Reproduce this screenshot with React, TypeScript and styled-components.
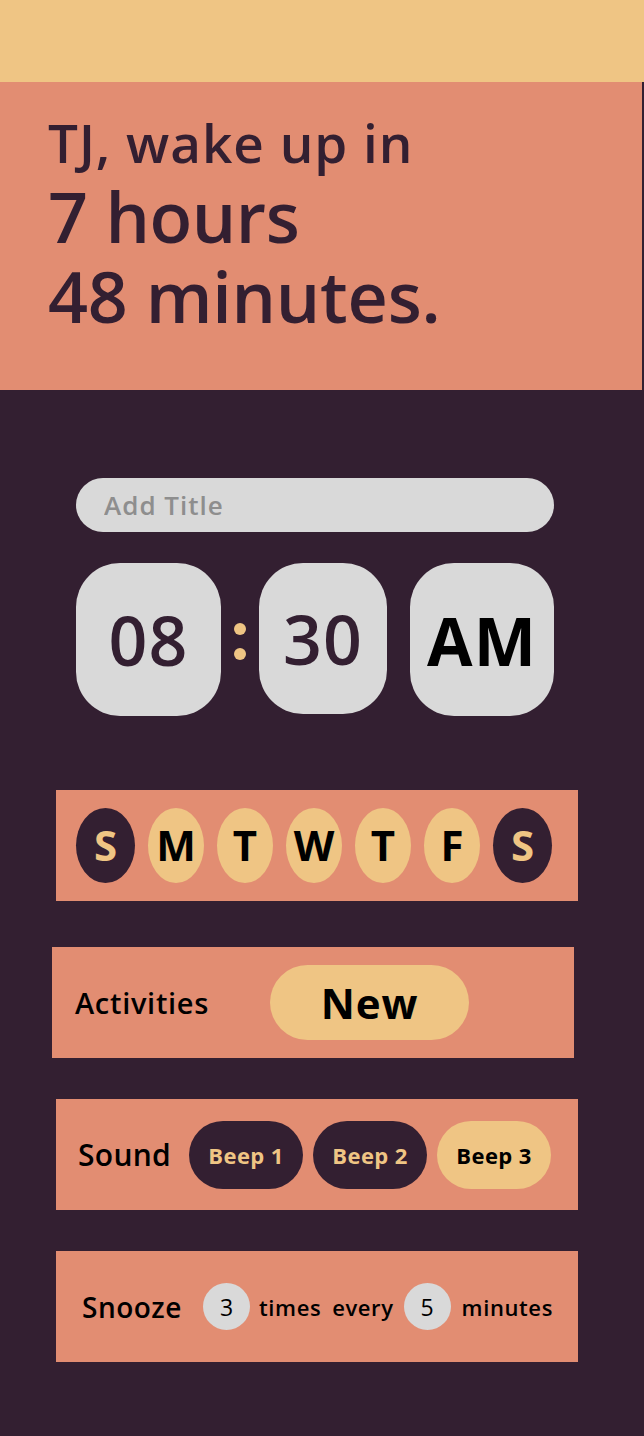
import React from 'react'
import styled, { createGlobalStyle } from 'styled-components'

const c = {
  sand: '#efc584',
  salmon: '#e28d72',
  plum: '#331f31',
  grey: '#d9d9d9',
  ink: '#000000',
}

const GlobalStyle = createGlobalStyle`
  html, body {
    margin: 0;
    padding: 0;
    background: ${c.plum};
  }
  body {
    font-family: 'Open Sans', 'Noto Sans', sans-serif;
  }
`

const Page = styled.div`
  width: 644px;
  min-height: 1436px;
  background: ${c.plum};
  display: flex;
  flex-direction: column;
`

const TopBar = styled.div`
  height: 82px;
  background: ${c.sand};
`

const Header = styled.header`
  height: 308px;
  width: 642px;
  background: ${c.salmon};
  box-sizing: border-box;
  padding: 27px 0 0 48px;
  color: ${c.plum};
`

const HeadLine = styled.div<{ $size: number; $lh: number; $ls: number }>`
  font-size: ${p => p.$size}px;
  font-weight: 600;
  line-height: ${p => p.$lh}px;
  letter-spacing: ${p => p.$ls}px;
  white-space: nowrap;
`

const Main = styled.main`
  display: flex;
  flex-direction: column;
  align-items: flex-start;
  padding: 88px 0 72px;
`

const TitleInput = styled.input`
  margin-left: 76px;
  width: 478px;
  height: 54px;
  box-sizing: border-box;
  border: none;
  outline: none;
  border-radius: 27px;
  background: ${c.grey};
  padding: 0 0 0 28px;
  font-family: inherit;
  font-size: 26px;
  font-weight: 600;
  letter-spacing: 1px;
  color: ${c.plum};
  &::placeholder {
    color: #8e8e8e;
  }
`

const TimeRow = styled.div`
  margin: 31px 0 0 76px;
  display: flex;
  align-items: flex-start;
`

const TimeBox = styled.div<{ $w: number; $h: number; $dark?: boolean }>`
  width: ${p => p.$w}px;
  height: ${p => p.$h}px;
  border-radius: 44px;
  background: ${c.grey};
  display: flex;
  align-items: center;
  justify-content: center;
  font-size: ${p => (p.$dark ? 68 : 66)}px;
  font-weight: ${p => (p.$dark ? 600 : 700)};
  color: ${p => (p.$dark ? c.plum : c.ink)};
  letter-spacing: 1px;
`

const Colon = styled.div`
  width: 38px;
  height: 153px;
  display: flex;
  flex-direction: column;
  align-items: center;
  justify-content: center;
  gap: 13px;
  padding-top: 4px;
  box-sizing: border-box;
  &::before,
  &::after {
    content: '';
    width: 12px;
    height: 12px;
    border-radius: 50%;
    background: ${c.sand};
  }
`

const Panel = styled.section<{ $left: number; $top: number; $pad: number }>`
  margin: ${p => p.$top}px 0 0 ${p => p.$left}px;
  width: 522px;
  height: 111px;
  box-sizing: border-box;
  background: ${c.salmon};
  display: flex;
  align-items: center;
  padding-left: ${p => p.$pad}px;
`

const DayList = styled.div`
  display: flex;
  gap: 13px;
`

const Day = styled.div<{ $off?: boolean }>`
  width: ${p => (p.$off ? 59 : 56)}px;
  height: 75px;
  border-radius: 50%;
  background: ${p => (p.$off ? c.plum : c.sand)};
  color: ${p => (p.$off ? c.sand : c.ink)};
  display: flex;
  align-items: center;
  justify-content: center;
  font-size: 42px;
  font-weight: 700;
  padding-bottom: 2px;
  box-sizing: border-box;
`

const Label = styled.span<{ $size: number; $w?: number; $ls?: number }>`
  font-size: ${p => p.$size}px;
  font-weight: 600;
  color: ${c.ink};
  width: ${p => (p.$w ? `${p.$w}px` : 'auto')};
  flex-shrink: 0;
  white-space: nowrap;
  letter-spacing: ${p => p.$ls ?? 0}px;
`

const NewButton = styled.button`
  width: 199px;
  height: 75px;
  border: none;
  border-radius: 38px;
  background: ${c.sand};
  font-family: inherit;
  font-size: 42px;
  font-weight: 700;
  color: ${c.ink};
  padding: 0;
  letter-spacing: 0.8px;
`

const BeepRow = styled.div`
  display: flex;
  gap: 10px;
`

const Beep = styled.button<{ $on?: boolean }>`
  width: 114px;
  height: 68px;
  border: none;
  border-radius: 34px;
  background: ${p => (p.$on ? c.sand : c.plum)};
  color: ${p => (p.$on ? c.ink : c.sand)};
  font-family: inherit;
  font-size: 22px;
  font-weight: 700;
  padding: 0;
  letter-spacing: 0.4px;
`

const Count = styled.span`
  width: 47px;
  height: 47px;
  border-radius: 50%;
  background: ${c.grey};
  color: ${c.ink};
  display: flex;
  align-items: center;
  justify-content: center;
  font-size: 23px;
  font-weight: 500;
  flex-shrink: 0;
`

const Word = styled.span<{ $ml: number }>`
  margin-left: ${p => p.$ml}px;
  font-size: 22px;
  font-weight: 600;
  letter-spacing: 0.6px;
  color: ${c.ink};
  white-space: nowrap;
`

const days = [
  { d: 'S', off: true },
  { d: 'M' },
  { d: 'T' },
  { d: 'W' },
  { d: 'T' },
  { d: 'F' },
  { d: 'S', off: true },
]

export default function App() {
  return (
    <Page>
      <GlobalStyle />
      <TopBar />
      <Header>
        <HeadLine $size={53} $lh={67} $ls={1}>TJ, wake up in</HeadLine>
        <HeadLine $size={70} $lh={80} $ls={-0.4}>7 hours</HeadLine>
        <HeadLine $size={70} $lh={80} $ls={-0.2}>48 minutes.</HeadLine>
      </Header>

      <Main>
        <TitleInput placeholder="Add Title" />

        <TimeRow>
          <TimeBox $w={145} $h={153} $dark>08</TimeBox>
          <Colon />
          <TimeBox $w={128} $h={151} $dark>30</TimeBox>
          <TimeBox $w={144} $h={153} style={{ marginLeft: 23 }}>AM</TimeBox>
        </TimeRow>

        <Panel $left={56} $top={74} $pad={20}>
          <DayList>
            {days.map((day, i) => (
              <Day key={i} $off={day.off}>{day.d}</Day>
            ))}
          </DayList>
        </Panel>

        <Panel $left={52} $top={46} $pad={23}>
          <Label $size={29} $w={195} $ls={0.7}>Activities</Label>
          <NewButton>New</NewButton>
        </Panel>

        <Panel $left={56} $top={41} $pad={22}>
          <Label $size={30} $w={111} $ls={0.3}>Sound</Label>
          <BeepRow>
            <Beep>Beep 1</Beep>
            <Beep>Beep 2</Beep>
            <Beep $on>Beep 3</Beep>
          </BeepRow>
        </Panel>

        <Panel $left={56} $top={41} $pad={26}>
          <Label $size={28} $w={121} $ls={0.5}>Snooze</Label>
          <Count>3</Count>
          <Word $ml={9}>times</Word>
          <Word $ml={11}>every</Word>
          <Count style={{ marginLeft: 10 }}>5</Count>
          <Word $ml={11}>minutes</Word>
        </Panel>
      </Main>
    </Page>
  )
}
